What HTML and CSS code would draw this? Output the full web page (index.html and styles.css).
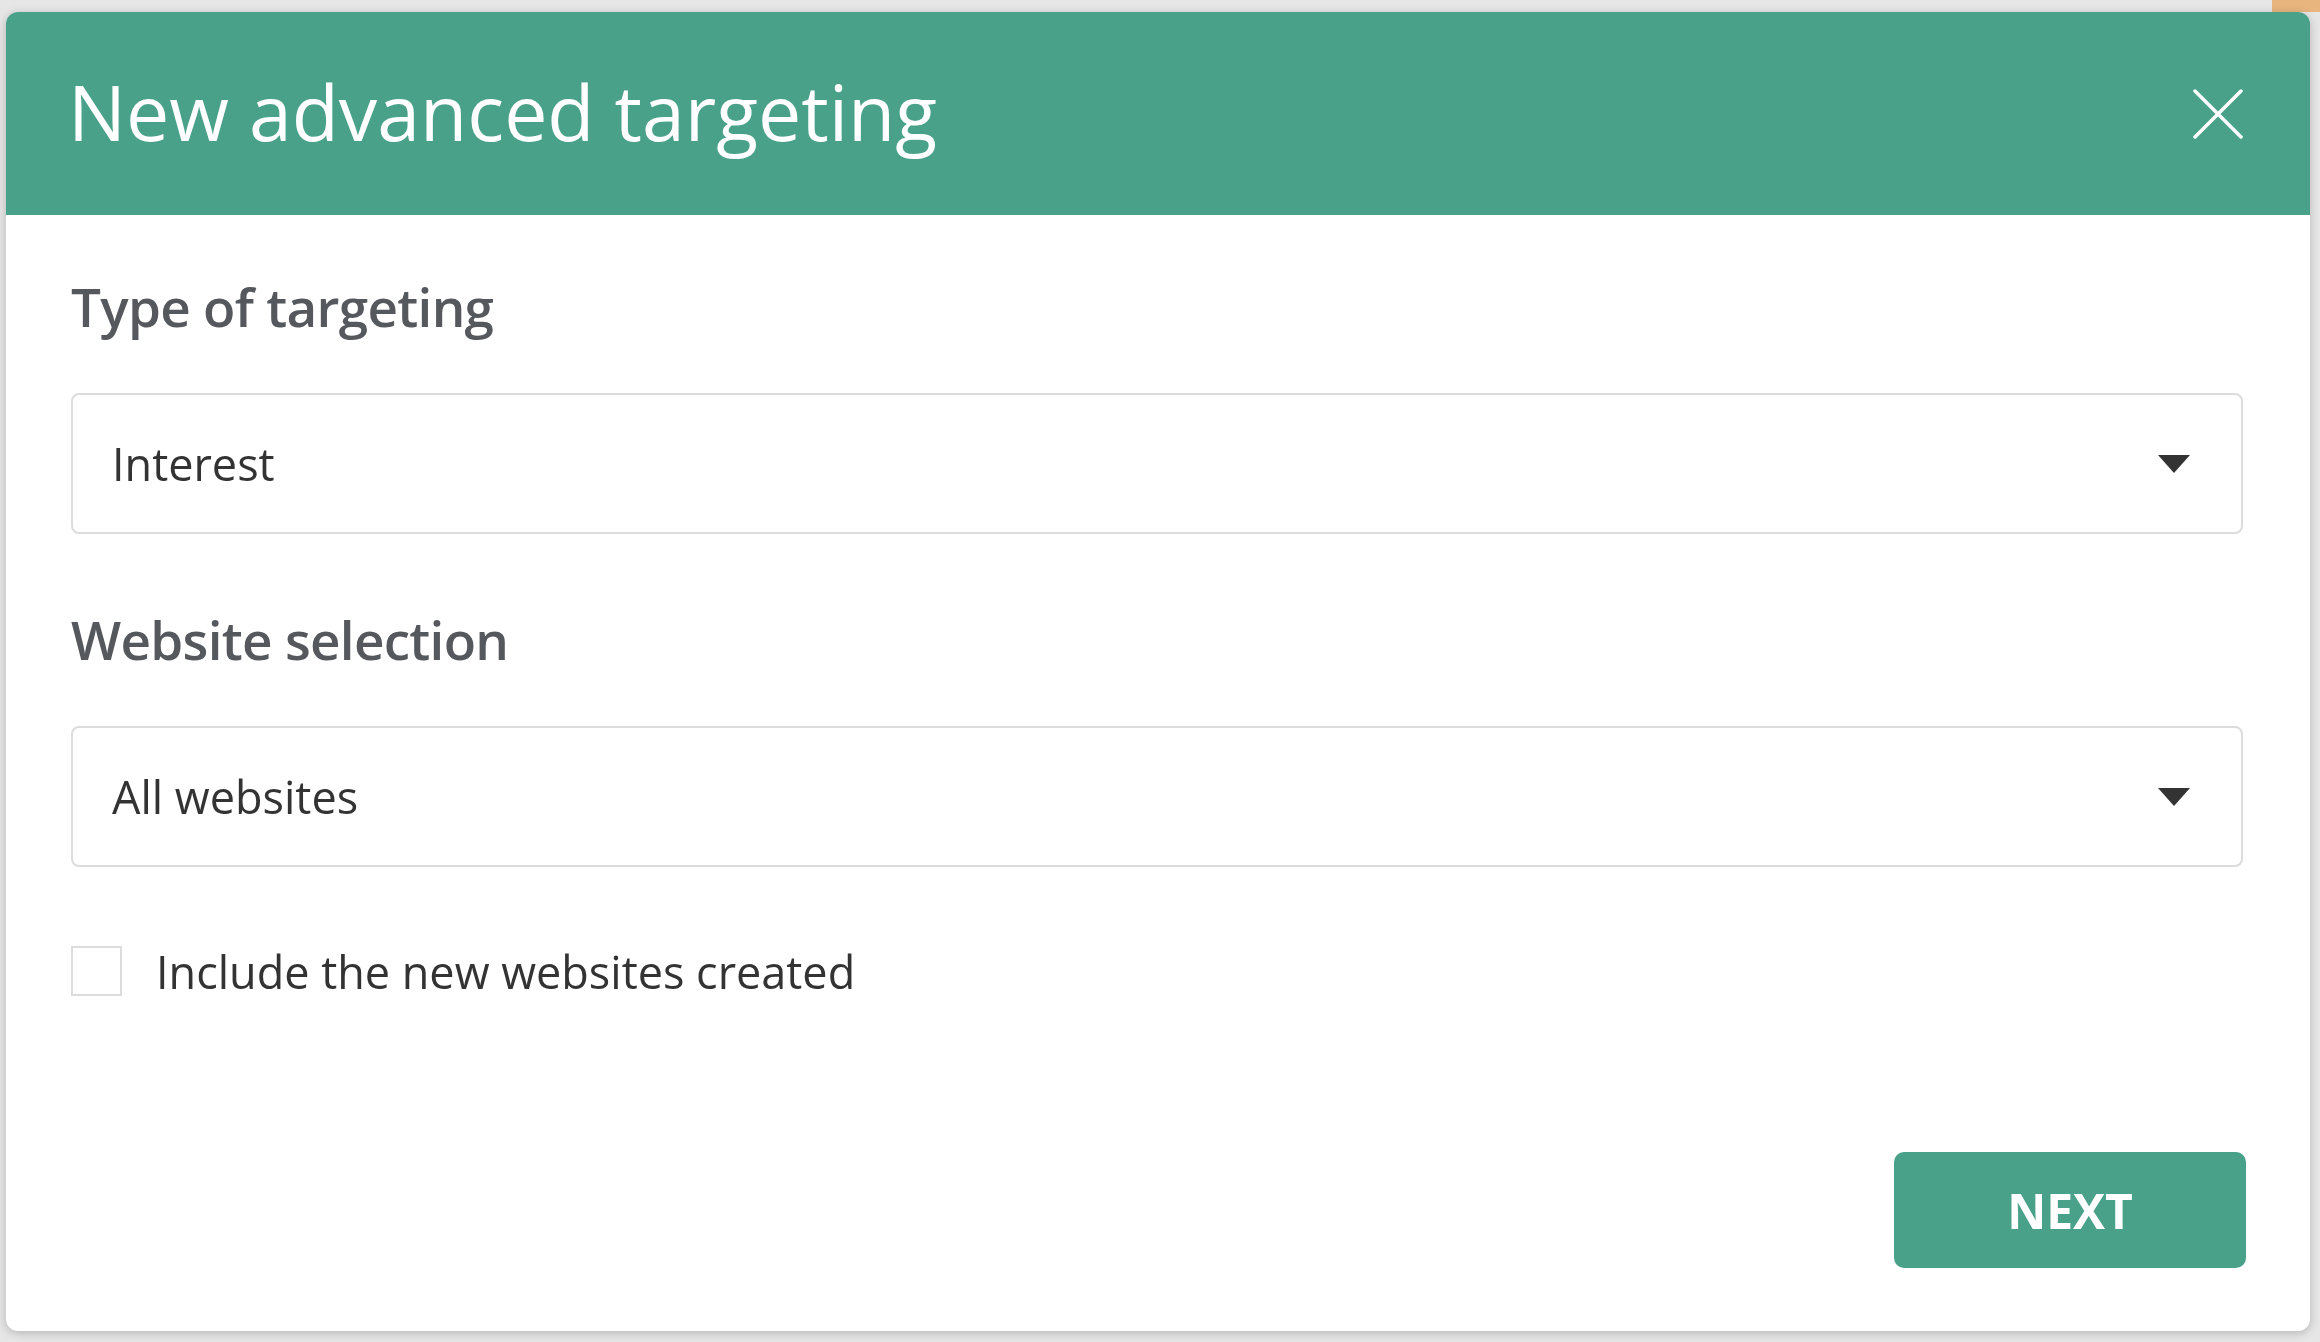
FILE: index.html
```html
<!DOCTYPE html>
<html lang="en">
  <head>
    <meta charset="UTF-8" />
    <meta name="viewport" content="width=device-width, initial-scale=1.0" />
    <title>New advanced targeting</title>
    <link rel="stylesheet" href="styles.css">
  </head>
  <body>
    <!-- page behind the dialog -->
    <div class="page">
      <div class="page-bar">
        <span class="page-badge"></span>
      </div>
    </div>

    <div class="backdrop">
      <section class="modal">
        <header class="modal-header">
          <h1>New advanced targeting</h1>
          <button class="close" type="button" aria-label="Close">
            <svg width="50" height="50" viewBox="0 0 50 50">
              <line x1="2" y1="2" x2="48" y2="48" />
              <line x1="48" y1="2" x2="2" y2="48" />
            </svg>
          </button>
        </header>

        <div class="modal-body">
          <h2 class="field-label">Type of targeting</h2>
          <div class="select">
            <span>Interest</span>
            <svg class="caret" width="32" height="18" viewBox="0 0 32 18">
              <polygon points="0,0 32,0 16,18" />
            </svg>
          </div>

          <h2 class="field-label">Website selection</h2>
          <div class="select select-last">
            <span>All websites</span>
            <svg class="caret" width="32" height="18" viewBox="0 0 32 18">
              <polygon points="0,0 32,0 16,18" />
            </svg>
          </div>

          <label class="check">
            <span class="box"></span>
            <span>Include the new websites created</span>
          </label>

          <div class="actions">
            <button class="next" type="button">NEXT</button>
          </div>
        </div>
      </section>
    </div>
  </body>
</html>
```

FILE: styles.css
```css
/* General Reset */
* {
  margin: 0;
  padding: 0;
  box-sizing: border-box;
  font-family: "Open Sans", "Noto Sans", sans-serif;
}

body {
  background-color: #e6e6e6;
  min-height: 100vh;
}

/* Page behind the dialog */
.page-bar {
  display: flex;
  justify-content: flex-end;
  height: 12px;
}

.page-badge {
  width: 48px;
  background-color: #e8b57f;
}

/* Dialog */
.backdrop {
  position: fixed;
  inset: 0;
  padding: 12px 10px 11px 6px;
  display: flex;
}

.modal {
  flex-grow: 1;
  display: flex;
  flex-direction: column;
  background-color: white;
  border-radius: 12px;
  box-shadow: 0 2px 10px rgba(0, 0, 0, 0.22);
  overflow: hidden;
}

.modal-header {
  height: 203px;
  flex-shrink: 0;
  display: flex;
  align-items: center;
  justify-content: space-between;
  padding: 0 67px 4px 62px;
  background-color: #48a188;
  color: white;
}

.modal-header h1 {
  font-size: 77px;
  font-weight: 400;
  line-height: 100px;
}

.close {
  width: 50px;
  height: 50px;
  margin-top: 4px;
  border: none;
  background: none;
  cursor: pointer;
}

.close svg {
  display: block;
}

.close line {
  stroke: white;
  stroke-width: 3.5;
  stroke-linecap: round;
}

.modal-body {
  flex-grow: 1;
  display: flex;
  flex-direction: column;
  padding: 60px 67px 63px 65px;
}

.field-label {
  font-size: 53px;
  font-weight: 600;
  letter-spacing: -0.7px;
  line-height: 64px;
  color: #55595d;
  margin-bottom: 54px;
}

.select {
  height: 141px;
  display: flex;
  align-items: center;
  justify-content: space-between;
  padding: 0 51px 0 39px;
  border: 2px solid #dcdcdc;
  border-radius: 8px;
  font-size: 45px;
  color: #333;
  margin-bottom: 74px;
}

.caret {
  display: block;
  fill: #333;
}

.select-last {
  margin-bottom: 79px;
}

.check {
  display: flex;
  align-items: center;
  gap: 34px;
  height: 50px;
  font-size: 45px;
  color: #333;
}

.box {
  width: 51px;
  height: 50px;
  border: 2px solid #dcdcdc;
}

.actions {
  margin-top: auto;
  display: flex;
  justify-content: flex-end;
}

.next {
  width: 352px;
  height: 116px;
  margin-right: -3px;
  border: none;
  border-radius: 10px;
  background-color: #48a188;
  color: white;
  font-size: 48px;
  font-weight: 700;
  cursor: pointer;
}
```
